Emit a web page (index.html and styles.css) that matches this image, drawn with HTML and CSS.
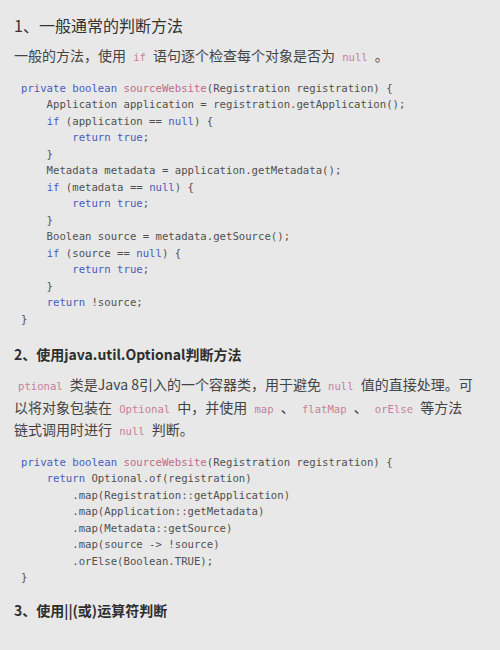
FILE: index.html
```html
<!DOCTYPE html>
<html lang="zh">
<head>
<meta charset="utf-8">
<link rel="stylesheet" href="styles.css">
</head>
<body>
<div class="page">
  <h1 class="h1">1、一般通常的判断方法</h1>
  <p class="para p1">一般的方法，使用 <code class="ic">if</code> 语句逐个检查每个对象是否为 <code class="ic">null</code> 。</p>
<pre class="code code1"><span class="kw">private</span> <span class="kw">boolean</span> <span class="fn">sourceWebsite</span>(Registration registration) {
    Application application = registration.getApplication();
    <span class="kw">if</span> (application == <span class="kw">null</span>) {
        <span class="kw">return</span> <span class="kw">true</span>;
    }
    Metadata metadata = application.getMetadata();
    <span class="kw">if</span> (metadata == <span class="kw">null</span>) {
        <span class="kw">return</span> <span class="kw">true</span>;
    }
    Boolean source = metadata.getSource();
    <span class="kw">if</span> (source == <span class="kw">null</span>) {
        <span class="kw">return</span> <span class="kw">true</span>;
    }
    <span class="kw">return</span> !source;
}</pre>
  <h2 class="h2">2、使用java.util.Optional判断方法</h2>
  <p class="para p2"><code class="ic">ptional</code> 类是Java 8引入的一个容器类，用于避免 <code class="ic">null</code> 值的直接处理。可<br>以将对象包装在 <code class="ic">Optional</code> 中，并使用 <code class="ic">map</code> 、 <code class="ic">flatMap</code> 、 <code class="ic">orElse</code> 等方法<br>链式调用时进行 <code class="ic">null</code> 判断。</p>
<pre class="code code2"><span class="kw">private</span> <span class="kw">boolean</span> <span class="fn">sourceWebsite</span>(Registration registration) {
    <span class="kw">return</span> Optional.of(registration)
        .map(Registration::getApplication)
        .map(Application::getMetadata)
        .map(Metadata::getSource)
        .map(source -&gt; !source)
        .orElse(Boolean.TRUE);
}</pre>
  <h2 class="h2 h3">3、使用||(或)运算符判断</h2>
</div>
</body>
</html>
```
FILE: styles.css
```css
html, body {
  margin: 0;
  padding: 0;
  background: #e8e8e8;
}
.page {
  width: 500px;
  height: 650px;
  box-sizing: border-box;
  padding: 12px 14px 0 14px;
  font-family: "Noto Sans CJK SC", "Noto Sans", sans-serif;
  color: #3a3a3a;
  overflow: hidden;
}
.h1 {
  margin: 0;
  font-size: 16px;
  font-weight: 400;
  line-height: 26px;
  color: #333;
}
.para {
  margin: 0;
  font-size: 14px;
  line-height: 22.5px;
  color: #444;
}
.p1 {
  margin-top: 6px;
}
.ic {
  font-family: "DejaVu Sans Mono", monospace;
  font-size: 10.6px;
  line-height: 1;
  padding: 0 4px;
  color: #c67f98;
}
.code {
  margin: 0;
  padding-left: 7px;
  font-family: "DejaVu Sans Mono", monospace;
  font-size: 10.65px;
  line-height: 16.5px;
  color: #505050;
}
.code1 {
  margin-top: 14px;
}
.kw {
  color: #4b5bbd;
}
.fn {
  color: #c0688a;
}
.h2 {
  margin: 15px 0 0 0;
  font-size: 14px;
  font-weight: 700;
  line-height: 22px;
  color: #2e2e2e;
}
.p2 {
  margin-top: 8px;
}
.code2 {
  margin-top: 14px;
}
.h3 {
  margin-top: 12px;
}
```
